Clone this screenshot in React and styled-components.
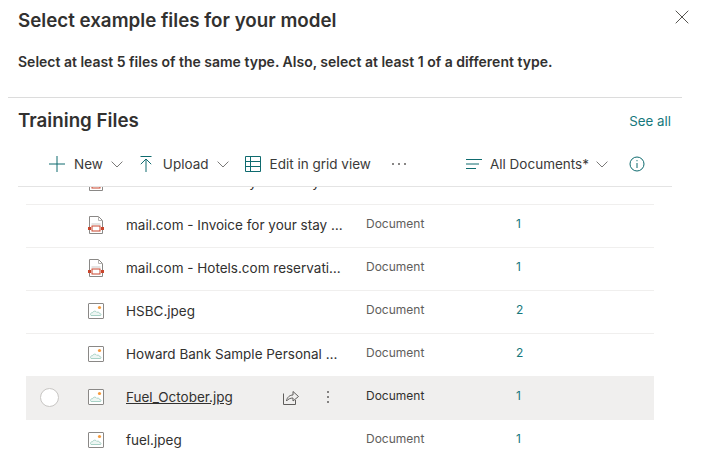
import React from "react";
import styled, { createGlobalStyle } from "styled-components";

const teal = "#0f6b6f";

const rows = [
  { kind: "pdf", name: "mail.com - Your stay summary", count: 1 },
  { kind: "pdf", name: "mail.com - Invoice for your stay …", count: 1 },
  { kind: "pdf", name: "mail.com - Hotels.com reservati…", count: 1 },
  { kind: "img", name: "HSBC.jpeg", count: 2 },
  { kind: "img", name: "Howard Bank Sample Personal …", count: 2 },
  { kind: "img", name: "Fuel_October.jpg", count: 1, hovered: true },
  { kind: "img", name: "fuel.jpeg", count: 1 },
];

const Chevron = () => (
  <ChevronSvg viewBox="0 0 12 7" fill="none" stroke="#6b6a69" strokeWidth="0.9">
    <path d="M0.6 0.6 L6 6 L11.4 0.6" />
  </ChevronSvg>
);

const PdfIcon = () => (
  <FileSvg viewBox="0 0 16 18" fill="none">
    <path d="M1.5 0.5 H10.5 L14.5 4.5 V17.5 H1.5 Z" fill="#fff" stroke="#8a8886" />
    <path d="M10.5 0.5 V4.5 H14.5" stroke="#b5b3b1" />
    <path d="M3.5 8 H12.5" stroke="#c8c6c4" />
    <rect x="4" y="10" width="8" height="5" fill="#fff" stroke="#c8452c" />
    <rect x="0" y="11" width="3" height="3" fill="#c8452c" />
    <rect x="13" y="11" width="3" height="3" fill="#c8452c" />
  </FileSvg>
);

const ImageIcon = () => (
  <FileSvg viewBox="0 0 16 16" fill="none">
    <rect x="0.5" y="0.5" width="15" height="15" rx="0.5" fill="#fff" stroke="#8a8886" />
    <circle cx="11.5" cy="4.5" r="1.6" fill="#f59a3c" />
    <path
      d="M3 12.5 C1.8 11 3 9.5 4.5 9.7 C5.2 7.8 8 7.6 8.8 9.4 C10 8.8 11.5 9.4 11.6 10.4 C13 10.4 13.4 12 12.6 12.5 Z"
      fill="#eef6f3"
      stroke="#9fcdbf"
      strokeWidth="0.9"
    />
  </FileSvg>
);

export default function App() {
  return (
    <Page>
      <GlobalStyle />
      <Header>
        <Title>Select example files for your model</Title>
        <CloseSvg viewBox="0 0 14 14" stroke="#55534f" strokeWidth="1" fill="none">
          <path d="M0.7 0.7 L13.3 13.3 M13.3 0.7 L0.7 13.3" />
        </CloseSvg>
      </Header>
      <Instruction>
        Select at least 5 files of the same type. Also, select at least 1 of a
        different type.
      </Instruction>
      <Divider />
      <SectionHead>
        <SectionTitle>Training Files</SectionTitle>
        <SeeAll>See all</SeeAll>
      </SectionHead>
      <Toolbar>
        <ToolGroup>
          <ToolButton>
            <ToolSvg viewBox="0 0 16 16" stroke={teal} fill="none">
              <path d="M0 8 H16 M8 0 V16" />
            </ToolSvg>
            New
            <Chevron />
          </ToolButton>
          <ToolButton>
            <ArrowSvg viewBox="0 0 14 16" stroke={teal} fill="none">
              <path d="M1.5 0.5 H12.5 M7 3 V16 M1.8 8.2 L7 3 L12.2 8.2" />
            </ArrowSvg>
            Upload
            <Chevron />
          </ToolButton>
          <ToolButton>
            <ToolSvg viewBox="0 0 16 16" stroke={teal} fill="none">
              <path d="M0.5 0.5 H15.5 V15.5 H0.5 Z M0.5 5.5 H15.5 M0.5 10.5 H15.5 M5.5 0.5 V15.5" />
            </ToolSvg>
            Edit in grid view
          </ToolButton>
          <MoreDots>
            <i />
            <i />
            <i />
          </MoreDots>
        </ToolGroup>
        <ToolGroup>
          <ViewButton>
            <ToolSvg viewBox="0 0 16 12" stroke={teal} fill="none">
              <path d="M0 1.5 H16 M0 6 H13 M0 10.5 H10" />
            </ToolSvg>
            All Documents*
            <Chevron />
          </ViewButton>
          <InfoSvg viewBox="0 0 16 16" fill="none" stroke={teal}>
            <circle cx="8" cy="8" r="7" />
            <path d="M8 7 V12" />
            <circle cx="8" cy="4.7" r="0.6" fill={teal} stroke="none" />
          </InfoSvg>
        </ToolGroup>
      </Toolbar>
      <ListViewport>
        <List>
          {rows.map((row) => (
            <Row key={row.name} $hovered={row.hovered}>
              <RadioCell>{row.hovered && <Radio />}</RadioCell>
              <IconCell>{row.kind === "pdf" ? <PdfIcon /> : <ImageIcon />}</IconCell>
              <NameCell>
                <FileName $hovered={row.hovered}>{row.name}</FileName>
                {row.hovered && (
                  <>
                    <ShareSvg viewBox="0 0 16 15" fill="none" stroke="#605e5c">
                      <path d="M0.5 3.5 V14.5 H12.5 V10" />
                      <path d="M3.5 11 C4 7 7 5 10 5 V1.5 L15.5 6.5 L10 11 V8 C7.5 8 5 9 3.5 11 Z" />
                    </ShareSvg>
                    <RowDots>
                      <i />
                      <i />
                      <i />
                    </RowDots>
                  </>
                )}
              </NameCell>
              <TypeCell $hovered={row.hovered}>Document</TypeCell>
              <CountCell>{row.count}</CountCell>
            </Row>
          ))}
        </List>
      </ListViewport>
    </Page>
  );
}

const GlobalStyle = createGlobalStyle`
  html, body {
    margin: 0;
    background: #fff;
  }
  body {
    font-family: Inter, "Liberation Sans", sans-serif;
    color: #323130;
  }
`;

const Page = styled.div`
  width: 702px;
  height: 456px;
  overflow: hidden;
  display: flex;
  flex-direction: column;
`;
const Header = styled.div`
  display: flex;
  justify-content: space-between;
  align-items: flex-start;
  padding: 9px 13px 0 18px;
`;
const Title = styled.h1`
  margin: 0;
  font-size: 18.75px;
  line-height: 24px;
  font-weight: 600;
`;
const CloseSvg = styled.svg`
  width: 14px;
  height: 14px;
  margin-top: 1px;
`;
const Instruction = styled.p`
  margin: 19px 0 0;
  padding-left: 18px;
  font-size: 14px;
  line-height: 20px;
  font-weight: 600;
`;
const Divider = styled.div`
  width: 674px;
  height: 1px;
  margin: 25px 0 0 8px;
  background: #dcdcdc;
`;
const SectionHead = styled.div`
  display: flex;
  justify-content: space-between;
  align-items: center;
  width: 654px;
  margin: 10px 0 0 18px;
  height: 26px;
`;
const SectionTitle = styled.h2`
  margin: 0;
  font-size: 18.75px;
  line-height: 26px;
  font-weight: 600;
`;
const SeeAll = styled.a`
  font-size: 13.3px;
  color: #16787c;
  margin-right: 1px;
`;
const Toolbar = styled.div`
  display: flex;
  justify-content: space-between;
  align-items: center;
  width: 623px;
  height: 28px;
  margin: 16px 0 0 49px;
`;
const ToolGroup = styled.div`
  display: flex;
  align-items: center;
  gap: 16px;
`;
const ToolButton = styled.div`
  display: flex;
  align-items: center;
  gap: 9px;
  font-size: 13.5px;
  line-height: 20px;
  color: #3b3a39;
`;
const ViewButton = styled(ToolButton)`
  gap: 8px;
  margin-right: 5px;
`;
const ToolSvg = styled.svg`
  width: 16px;
  height: 16px;
  flex: none;
`;
const ArrowSvg = styled.svg`
  width: 14px;
  height: 16px;
  flex: none;
  margin-right: 1px;
`;
const ChevronSvg = styled.svg`
  width: 12px;
  height: 7px;
  flex: none;
  margin-left: -1px;
`;
const InfoSvg = styled.svg`
  width: 16px;
  height: 16px;
  margin-right: 27px;
`;
const MoreDots = styled.div`
  display: flex;
  gap: 4px;
  margin-left: 5px;
  i {
    width: 2px;
    height: 2px;
    border-radius: 50%;
    background: #605e5c;
  }
`;
const ListViewport = styled.div`
  flex: 1;
  width: 654px;
  margin: 8px 0 0 18px;
  overflow: hidden;
  border-top: 1px solid #e4e4e4;
`;
const List = styled.div`
  margin: -25px 0 0 8px;
  width: 628px;
`;
const Row = styled.div`
  display: grid;
  grid-template-columns: 46px 54px 240px 150px 1fr;
  align-items: center;
  height: 43px;
  box-sizing: border-box;
  padding-bottom: 2px;
  border-bottom: 1px solid #f0efee;
  background: ${(p) => (p.$hovered ? "#f0efee" : "transparent")};
`;
const RadioCell = styled.div`
  display: flex;
  padding-left: 14px;
  margin-top: 1px;
`;
const Radio = styled.span`
  width: 17px;
  height: 17px;
  border: 1px solid #c8c6c4;
  border-radius: 50%;
  background: #fff;
`;
const IconCell = styled.div`
  display: flex;
  padding-left: 16px;
`;
const FileSvg = styled.svg`
  width: 16px;
  height: auto;
`;
const NameCell = styled.div`
  display: flex;
  align-items: center;
  font-size: 13.5px;
  color: #323130;
`;
const FileName = styled.span`
  text-decoration: ${(p) => (p.$hovered ? "underline" : "none")};
  white-space: nowrap;
`;
const ShareSvg = styled.svg`
  width: 16px;
  height: 15px;
  margin-left: 50px;
`;
const RowDots = styled.div`
  display: flex;
  flex-direction: column;
  gap: 3px;
  margin-left: 28px;
  i {
    width: 2px;
    height: 2px;
    border-radius: 50%;
    background: #605e5c;
  }
`;
const TypeCell = styled.div`
  font-size: 12px;
  margin-bottom: 4px;
  color: ${(p) => (p.$hovered ? "#323130" : "#605e5c")};
`;
const CountCell = styled.div`
  font-size: 12px;
  margin-bottom: 4px;
  color: #16787c;
`;
